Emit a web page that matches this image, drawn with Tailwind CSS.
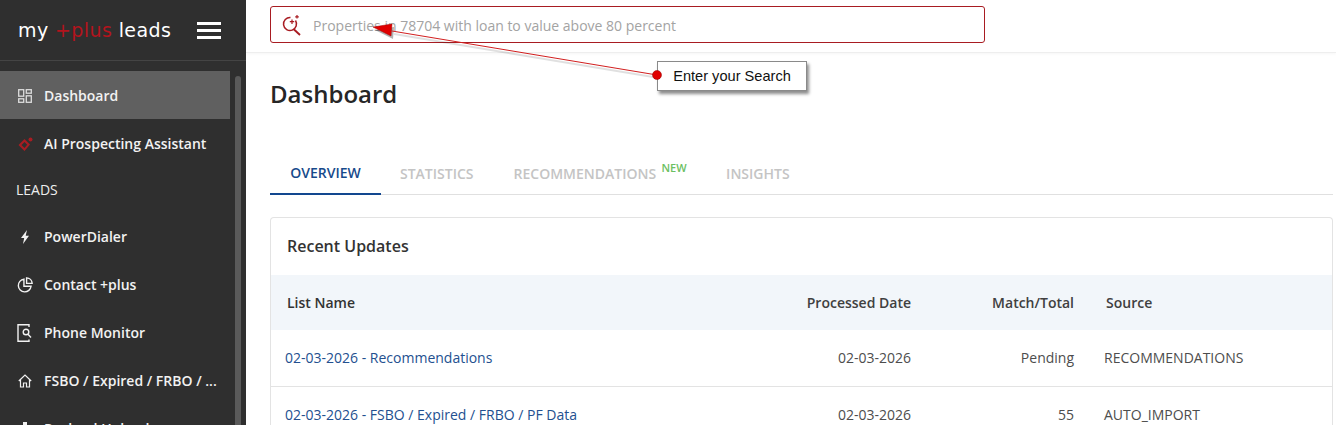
<!DOCTYPE html>
<html lang="en">
<head>
    <meta charset="UTF-8" />
    <title>my +plus leads - Dashboard</title>
    <script src="https://cdn.jsdelivr.net/npm/@tailwindcss/browser@4"></script>
</head>
<body class="relative h-[425px] overflow-hidden bg-white font-['Open_Sans',sans-serif]">
    <div class="flex h-[425px]">
        <!-- sidebar -->
        <aside class="relative w-[246px] shrink-0 overflow-hidden bg-[#2f2f2f] text-[#f2f2f2]">
            <div class="flex h-[61px] items-center border-b border-[#444444] pl-[18px]">
                <span class="w-[165px] whitespace-nowrap font-['DejaVu_Sans',sans-serif] text-[19px] tracking-[0.4px] text-white">my <span class="text-[#b3141d]">+plus</span> leads</span>
                <div class="ml-[14px] flex w-6 flex-col gap-[4px]">
                    <span class="h-[3px] bg-white"></span>
                    <span class="h-[3px] bg-white"></span>
                    <span class="h-[3px] bg-white"></span>
                </div>
            </div>
            <nav class="w-[230px] pt-[10px] text-sm font-semibold">
                <a class="flex h-[48px] items-center gap-[12px] bg-[#606060] pl-[18px] pt-[2px]">
                    <svg class="h-[14px] w-[14px]" viewBox="0 0 14 14" fill="none" stroke="#dddddd" stroke-width="1.3"><rect x="0.7" y="0.7" width="5" height="6.5"/><rect x="8.3" y="0.7" width="5" height="3.5"/><rect x="0.7" y="9.8" width="5" height="3.5"/><rect x="8.3" y="6.8" width="5" height="6.5"/></svg>
                    Dashboard
                </a>
                <a class="flex h-[48px] items-center gap-[11px] pl-[18px] pt-[2px]">
                    <svg class="h-[15px] w-[15px]" viewBox="0 0 15 15" fill="#a81c22"><path d="M6.5 2 L12 7.5 L6.5 14 L0.5 8 Z M6.5 5 L3.5 8 L6.5 11 L9.2 7.7 Z" fill-rule="evenodd"/><circle cx="12.5" cy="2.5" r="2"/></svg>
                    AI Prospecting Assistant
                </a>
                <div class="flex h-[44px] items-center pl-4 pt-[2px] font-normal text-[#eeeeee]">LEADS</div>
                <a class="mt-[2px] flex h-[48px] items-center gap-[12px] pl-[18px]">
                    <svg class="h-[14px] w-[14px]" viewBox="0 0 14 14" fill="#f2f2f2"><path d="M9 0 L3 8 H6.2 L5 14 L11 5.8 H7.7 Z"/></svg>
                    PowerDialer
                </a>
                <a class="flex h-[48px] items-center gap-[11px] pl-[17px]">
                    <svg class="h-[16px] w-[16px]" viewBox="0 0 15 15" fill="none" stroke="#f2f2f2" stroke-width="1.3"><path d="M6.5 2 A6 6 0 1 0 13.2 8.7 H6.5 Z"/><path d="M9 0.8 A5.5 5.5 0 0 1 14.2 6 H9 Z"/></svg>
                    Contact +plus
                </a>
                <a class="flex h-[48px] items-center gap-[12px] pl-[17px]">
                    <svg class="h-[18px] w-[15px]" viewBox="0 0 15 18" fill="none" stroke="#f2f2f2" stroke-width="1.4"><path d="M12 3 V0.8 H1 V17.2 H12 V15.5"/><circle cx="9" cy="8" r="2.8"/><path d="M11 10.2 L14 13.5"/></svg>
                    Phone Monitor
                </a>
                <a class="flex h-[48px] items-center gap-[12px] pl-[18px]">
                    <svg class="h-[14px] w-[14px]" viewBox="0 0 14 14" fill="none" stroke="#f2f2f2" stroke-width="1.2"><path d="M0.8 7 L7 1 L13.2 7 M2.5 5.8 V13 H5.5 V9 H8.5 V13 H11.5 V5.8"/></svg>
                    <span class="whitespace-nowrap">FSBO / Expired / FRBO / ...</span>
                </a>
                <a class="flex h-[48px] items-center gap-[12px] pl-[18px]">
                    <svg class="h-[14px] w-[14px]" viewBox="0 0 14 14" fill="#f2f2f2"><path d="M5 0 H9 V6 H12 V14 H2 V6 H5 Z"/></svg>
                    Payload Uploads
                </a>
            </nav>
            <div class="absolute left-[235px] top-[76px] h-[360px] w-[6px] rounded-full bg-[#5a5a5a]"></div>
        </aside>

        <!-- main -->
        <main class="min-w-0 flex-1">
            <div class="h-[53px] border-b border-[#eeeeee] pl-6 pt-[6px] shadow-[0_1px_3px_rgba(0,0,0,0.04)]">
                <div class="flex h-[37px] w-[715px] items-center rounded-[3px] border border-[#a81c22] pl-[10px]">
                    <svg class="h-[24px] w-[24px]" viewBox="0 0 24 24" fill="none" stroke="#a81c22" stroke-width="1.5"><path d="M9.5 4.5 A6.5 6.5 0 1 0 14.5 7.5"/><path d="M12.5 16 L19 22" stroke-width="1.9"/><path d="M11 6.5 V11 M8.8 8.7 H13.2 M16 2 V5.6 M14.2 3.8 H17.8" stroke-width="1.2"/></svg>
                    <span class="ml-[8px] pt-[2px] text-sm text-[#a3a3a3]">Properties in 78704 with loan to value above 80 percent</span>
                </div>
            </div>
            <div class="pl-6 pr-[3px]">
                <h1 class="mt-6 text-2xl font-semibold leading-[33px] text-[#262626]">Dashboard</h1>
                <div class="mt-[37px] flex h-[48px] border-b border-[#e0e0e0] text-sm font-semibold text-[#c4c4c4]">
                    <div class="flex h-[48px] w-[111px] items-center justify-center border-b-2 border-[#12478f] pt-[6px] text-[#174a8b]">OVERVIEW</div>
                    <div class="ml-[19px] flex items-center pt-[6px]">STATISTICS</div>
                    <div class="relative ml-[40px] flex items-center pt-[6px]">RECOMMENDATIONS<span class="absolute left-[148px] top-[13px] text-[11px] text-[#6cc062]">NEW</span></div>
                    <div class="ml-[70px] flex items-center pt-[6px]">INSIGHTS</div>
                </div>
                <section class="mt-[22px] rounded-t-[4px] border border-b-0 border-[#e3e3e3]">
                    <h2 class="flex h-[57px] items-center pb-[2px] pl-4 text-base font-semibold text-[#333333]">Recent Updates</h2>
                    <table class="w-full table-fixed text-sm text-[#4d4d4d]">
                        <thead class="bg-[#f2f6fa] font-semibold text-[#404040]">
                            <tr class="h-[55px]">
                                <th class="w-[470px] pl-4 text-left font-semibold text-[#333333]">List Name</th>
                                <th class="w-[170px] text-right font-semibold">Processed Date</th>
                                <th class="w-[163px] text-right font-semibold">Match/Total</th>
                                <th class="pl-8 text-left font-semibold">Source</th>
                            </tr>
                        </thead>
                        <tbody>
                            <tr class="h-[56px] border-b border-[#e3e3e3]">
                                <td class="pl-[14px] text-[#23508f]">02-03-2026 - Recommendations</td>
                                <td class="text-right">02-03-2026</td>
                                <td class="text-right">Pending</td>
                                <td class="pl-[30px]">RECOMMENDATIONS</td>
                            </tr>
                            <tr class="h-[58px]">
                                <td class="whitespace-nowrap pl-[14px] text-[#23508f]">02-03-2026 - FSBO / Expired / FRBO / PF Data</td>
                                <td class="text-right">02-03-2026</td>
                                <td class="text-right">55</td>
                                <td class="pl-[30px]">AUTO_IMPORT</td>
                            </tr>
                        </tbody>
                    </table>
                </section>
            </div>
        </main>
    </div>

    <!-- annotation over the page -->
    <div class="absolute left-[657px] top-[61px] flex h-[30px] w-[150px] items-center justify-center border border-[#8a8a8a] bg-white pt-[1px] font-['Liberation_Sans',sans-serif] text-[14.6px] text-[#111111] shadow-[2px_3px_3px_rgba(0,0,0,0.45)]">Enter your Search</div>
    <svg class="pointer-events-none absolute left-0 top-0" width="1336" height="425" viewBox="0 0 1336 425">
        <path d="M657 75 L392 31" stroke="#000000" stroke-opacity="0.12" stroke-width="2" transform="translate(2 3)" fill="none"/>
        <path d="M373 27 L392 24 L391 36 Z" fill="#000000" fill-opacity="0.3" transform="translate(2 3)"/>
        <path d="M657 75 L392 31" stroke="#d11f1f" stroke-width="1" fill="none"/>
        <path d="M373 27 L392 24 L391 36 Z" fill="#e00000" stroke="#a00000" stroke-width="0.5"/>
        <circle cx="657" cy="75" r="4.5" fill="#e00000" stroke="#900000" stroke-width="0.5"/>
    </svg>
</body>
</html>
